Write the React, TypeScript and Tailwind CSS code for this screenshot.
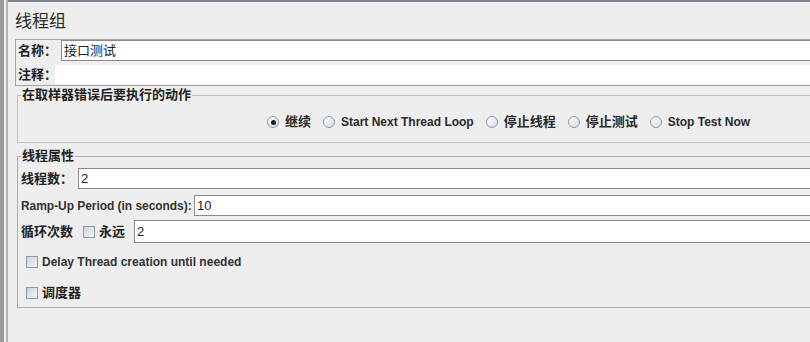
import React from "react";

const font = "font-['Liberation_Sans','Noto_Sans_CJK_SC',sans-serif]";

function Radio({ checked }: { checked?: boolean }) {
  return (
    <span className="w-[12px] h-[12px] rounded-full border border-[#8b9aa8] bg-gradient-to-br from-white to-[#d5dbe2] flex items-center justify-center shrink-0">
      {checked && <span className="w-[5px] h-[5px] rounded-full bg-[#1e1e1e]" />}
    </span>
  );
}

function Check() {
  return (
    <span className="w-[12px] h-[12px] border border-[#8b9aa8] bg-gradient-to-br from-[#c9d3df] to-[#f5f7f9] shrink-0" />
  );
}

function Field({ value, h }: { value?: string; h: string }) {
  return (
    <div className={`flex-1 ${h} bg-white border border-[#8a8a8a] flex items-center pl-[2px] text-[13px] text-[#222]`}>
      {value}
    </div>
  );
}

export default function App() {
  const radios: { label: string; checked?: boolean }[] = [
    { label: "继续", checked: true },
    { label: "Start Next Thread Loop" },
    { label: "停止线程" },
    { label: "停止测试" },
    { label: "Stop Test Now" },
  ];
  return (
    <div className={`w-[810px] h-[342px] overflow-hidden bg-[#eeeeee] flex ${font} text-[#222]`}>
      <div className="w-[4px] h-full shrink-0 bg-[radial-gradient(#9c9c9c_1px,transparent_1px)] bg-[length:2px_2px] bg-[#dcdcdc]" />
      <div className="w-[2px] h-full shrink-0 bg-[#f2f2f2]" />
      <div className="w-[2px] h-full shrink-0 bg-[#b4b4b4]" />
      <div className="w-[1100px] shrink-0 border-t-2 border-[#7d8594]">
        <div className="pl-[7px] mt-[10px] h-[20px] leading-[20px] text-[17px] text-[#2a2a2a]">线程组</div>
        <div className="ml-[7px] mt-[7px] border border-[#a3a3a3] pb-[1px]">
          <div className="flex items-center h-[21px]">
            <span className="w-[45px] shrink-0 whitespace-nowrap pl-[2px] text-[13px] font-bold leading-[21px]">名称：</span>
            <Field value="接口测试" h="h-[21px]" />
          </div>
          <div className="flex items-center h-[19px] mt-[4px]">
            <span className="w-[39px] shrink-0 whitespace-nowrap pl-[2px] text-[13px] font-bold leading-[19px]">注释：</span>
            <div className="flex-1 h-[19px] bg-white" />
          </div>
        </div>
        <fieldset className="ml-[9px] mt-[2px] border border-[#bcc2c8] pb-[12px]">
          <legend className="ml-[3px] px-[1px] text-[13px] font-bold leading-[14px]">在取样器错误后要执行的动作</legend>
          <div className="flex items-center h-[16px] mt-[12px] pl-[249px]">
            {radios.map((r, i) => (
              <div key={r.label} className={`flex items-center gap-[6px] ${i > 0 ? "ml-[12px]" : ""}`}>
                <Radio checked={r.checked} />
                <span className={`${/[A-Za-z]/.test(r.label) ? "text-[12px]" : "text-[13px]"} font-bold leading-[16px] text-[#2a2a2a] whitespace-nowrap`}>{r.label}</span>
              </div>
            ))}
          </div>
        </fieldset>
        <fieldset className="ml-[9px] mt-[6px] border border-[#a8adb2] pb-[4px]">
          <legend className="ml-[3px] px-[1px] text-[13px] font-bold leading-[14px]">线程属性</legend>
          <div className="flex items-center h-[21px] mt-[5px]">
            <span className="w-[60px] shrink-0 whitespace-nowrap pl-[3px] text-[13px] font-bold">线程数：</span>
            <Field value="2" h="h-[21px]" />
          </div>
          <div className="flex items-center h-[21px] mt-[6px]">
            <span className="w-[176px] shrink-0 whitespace-nowrap pl-[3px] text-[12px] tracking-[-0.05px] font-bold text-[#333]">Ramp-Up Period (in seconds):</span>
            <Field value="10" h="h-[21px]" />
          </div>
          <div className="flex items-center h-[23px] mt-[4px]">
            <span className="w-[65px] shrink-0 whitespace-nowrap pl-[3px] text-[13px] font-bold">循环次数</span>
            <Check />
            <span className="ml-[4px] w-[35px] shrink-0 whitespace-nowrap text-[13px] font-bold">永远</span>
            <Field value="2" h="h-[23px]" />
          </div>
          <div className="flex items-center h-[20px] mt-[9px] pl-[8px]">
            <Check />
            <span className="ml-[4px] whitespace-nowrap text-[12px] font-bold text-[#333]">Delay Thread creation until needed</span>
          </div>
          <div className="flex items-center h-[20px] mt-[11px] pl-[8px]">
            <Check />
            <span className="ml-[4px] whitespace-nowrap text-[13px] font-bold">调度器</span>
          </div>
        </fieldset>
      </div>
    </div>
  );
}
